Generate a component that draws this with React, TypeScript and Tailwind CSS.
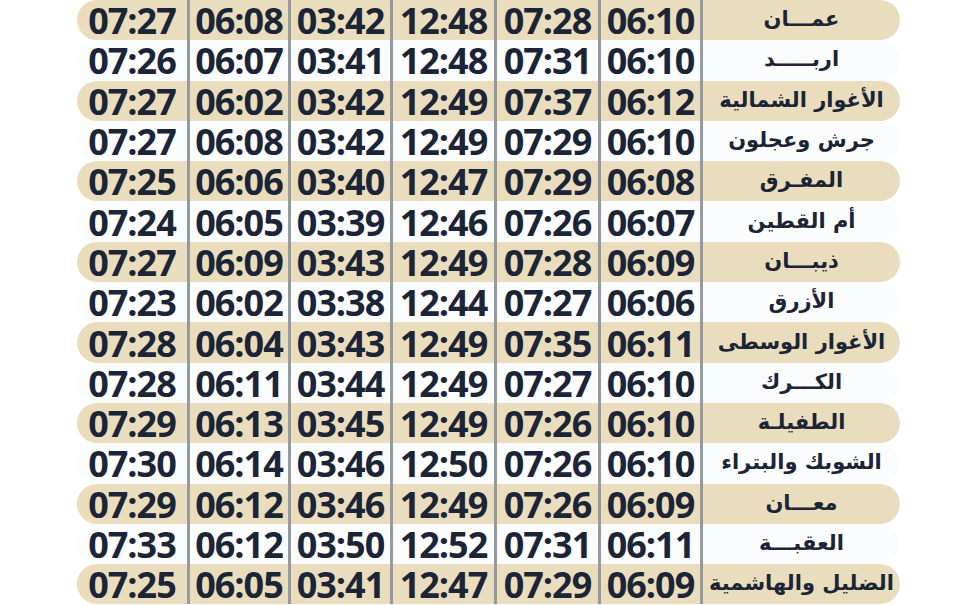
const ROWS: { city: string; times: string[] }[] = [
  { city: 'عمـــان', times: ['07:27', '06:08', '03:42', '12:48', '07:28', '06:10'] },
  { city: 'اربـــــد', times: ['07:26', '06:07', '03:41', '12:48', '07:31', '06:10'] },
  { city: 'الأغوار الشمالية', times: ['07:27', '06:02', '03:42', '12:49', '07:37', '06:12'] },
  { city: 'جرش وعجلون', times: ['07:27', '06:08', '03:42', '12:49', '07:29', '06:10'] },
  { city: 'المفـرق', times: ['07:25', '06:06', '03:40', '12:47', '07:29', '06:08'] },
  { city: 'أم القطين', times: ['07:24', '06:05', '03:39', '12:46', '07:26', '06:07'] },
  { city: 'ذيبـــان', times: ['07:27', '06:09', '03:43', '12:49', '07:28', '06:09'] },
  { city: 'الأزرق', times: ['07:23', '06:02', '03:38', '12:44', '07:27', '06:06'] },
  { city: 'الأغوار الوسطى', times: ['07:28', '06:04', '03:43', '12:49', '07:35', '06:11'] },
  { city: 'الكـــرك', times: ['07:28', '06:11', '03:44', '12:49', '07:27', '06:10'] },
  { city: 'الطفيلـة', times: ['07:29', '06:13', '03:45', '12:49', '07:26', '06:10'] },
  { city: 'الشوبك والبتراء', times: ['07:30', '06:14', '03:46', '12:50', '07:26', '06:10'] },
  { city: 'معـــان', times: ['07:29', '06:12', '03:46', '12:49', '07:26', '06:09'] },
  { city: 'العقبـــة', times: ['07:33', '06:12', '03:50', '12:52', '07:31', '06:11'] },
  { city: 'الضليل والهاشمية', times: ['07:25', '06:05', '03:41', '12:47', '07:29', '06:09'] },
]

// column widths in px, left to right (the city name takes the rest)
const CELL_W = ['w-[113px]', 'w-[101px]', 'w-[102px]', 'w-[104px]', 'w-[104px]', 'w-[102px]']

function TimeRow({ city, times, shaded }: { city: string; times: string[]; shaded: boolean }) {
  return (
    <div className="flex h-[40.3px] pl-[77px]">
      <div className={`flex w-[823px] h-full rounded-full ${shaded ? 'bg-[#e9ddbd]' : 'bg-[#fbfcfe]'}`}>
        {times.map((t, i) => (
          <div
            key={i}
            className={`${CELL_W[i]} flex items-center justify-center pt-[2px] border-r-[3px] border-[#959aa1] text-[36px] font-bold tracking-[-1px] leading-[36px] text-[#1b2536]`}
            style={{ fontFamily: '"Open Sans", "Noto Sans", sans-serif' }}
          >
            {t}
          </div>
        ))}
        <div
          dir="rtl"
          className="flex-1 flex items-center justify-center text-[21px] font-bold leading-[30px] text-[#1b2536] pb-[2px]"
          style={{ fontFamily: '"DejaVu Sans", sans-serif' }}
        >
          {city}
        </div>
      </div>
    </div>
  )
}

export default function App() {
  return (
    <div className="w-[978px] h-[605px] overflow-hidden bg-white">
      {ROWS.map((r, i) => (
        <TimeRow key={i} city={r.city} times={r.times} shaded={i % 2 === 0} />
      ))}
    </div>
  )
}
